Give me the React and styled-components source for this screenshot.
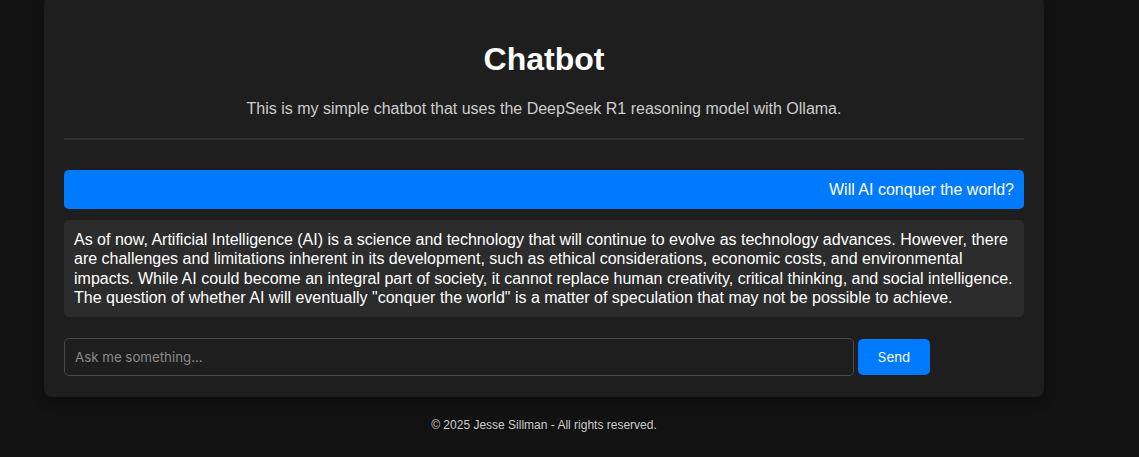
import React from 'react'
import styled, { createGlobalStyle } from 'styled-components'

const GlobalStyle = createGlobalStyle`
  html, body {
    margin: 0;
    padding: 0;
    background: #121212;
    color: #ffffff;
    font-family: "Liberation Sans", Arial, Helvetica, sans-serif;
  }
`

const Page = styled.div`
  width: 1000px;
  margin-left: 44px;
  margin-top: -4px;
`

const Card = styled.main`
  background: #1e1e1e;
  border-radius: 8px;
  padding: 24px 20px 21px;
  box-shadow: 0 4px 12px rgba(0, 0, 0, 0.35);
`

const Header = styled.header`
  text-align: center;
  border-bottom: 2px solid #2e2e2e;
  padding-bottom: 20px;
`

const Title = styled.h1`
  font-size: 32px;
  font-weight: 700;
  margin: 21px 0 0;
  line-height: 37px;
`

const Subtitle = styled.p`
  font-size: 16px;
  color: #cccccc;
  margin: 21px 0 0;
  line-height: 19px;
`

const ChatBox = styled.section`
  display: flex;
  flex-direction: column;
  gap: 11px;
  margin-top: 30px;
`

const Bubble = styled.div`
  padding: 10px;
  border-radius: 5px;
  font-size: 16px;
  line-height: 19.2px;
  text-align: ${p => (p.$user ? 'right' : 'left')};
  background: ${p => (p.$user ? '#007bff' : '#2c2c2c')};
  color: #ffffff;
`

const InputRow = styled.form`
  display: flex;
  align-items: center;
  gap: 4px;
  margin-top: 21px;
`

const TextInput = styled.input`
  width: 790px;
  height: 38px;
  box-sizing: border-box;
  padding: 0 10px;
  background: #1e1e1e;
  border: 1px solid #4a4a4a;
  border-radius: 5px;
  color: #ffffff;
  font-family: Inter, "Noto Sans", sans-serif;
  font-size: 13.3px;
  outline: none;

  &::placeholder {
    color: #8a8a8a;
  }
`

const SendButton = styled.button`
  width: 72px;
  height: 36px;
  background: #007bff;
  color: #ffffff;
  border: none;
  border-radius: 5px;
  font-family: Inter, "Noto Sans", sans-serif;
  font-size: 13.3px;
  cursor: pointer;
`

const Footer = styled.footer`
  text-align: center;
  font-size: 12px;
  color: #cccccc;
  margin-top: 21px;
`

function App() {
  return (
    <>
      <GlobalStyle />
      <Page>
        <Card>
          <Header>
            <Title>Chatbot</Title>
            <Subtitle>This is my simple chatbot that uses the DeepSeek R1 reasoning model with Ollama.</Subtitle>
          </Header>

          <ChatBox>
            <Bubble $user>Will AI conquer the world?</Bubble>
            <Bubble>
              As of now, Artificial Intelligence (AI) is a science and technology that will continue to evolve as
              technology advances. However, there are challenges and limitations inherent in its development, such as
              ethical considerations, economic costs, and environmental impacts. While AI could become an integral part
              of society, it cannot replace human creativity, critical thinking, and social intelligence. The question
              of whether AI will eventually "conquer the world" is a matter of speculation that may not be possible to
              achieve.
            </Bubble>
          </ChatBox>

          <InputRow onSubmit={e => e.preventDefault()}>
            <TextInput placeholder="Ask me something..." />
            <SendButton type="submit">Send</SendButton>
          </InputRow>
        </Card>
        <Footer>© 2025 Jesse Sillman - All rights reserved.</Footer>
      </Page>
    </>
  )
}

export default App
